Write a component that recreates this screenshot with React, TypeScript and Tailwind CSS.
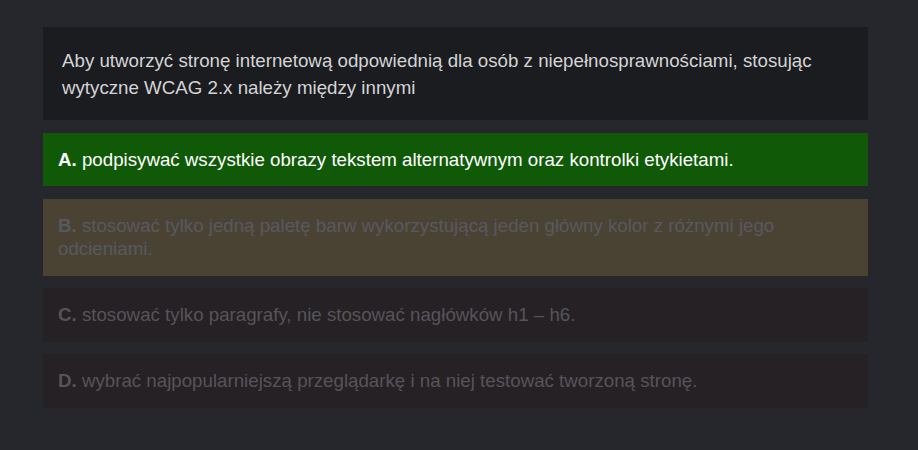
const answers = [
  { letter: "A", text: "podpisywać wszystkie obrazy tekstem alternatywnym oraz kontrolki etykietami.", state: "correct" },
  { letter: "B", text: "stosować tylko jedną paletę barw wykorzystującą jeden główny kolor z różnymi jego odcieniami.", state: "wrong" },
  { letter: "C", text: "stosować tylko paragrafy, nie stosować nagłówków h1 – h6.", state: "dim" },
  { letter: "D", text: "wybrać najpopularniejszą przeglądarkę i na niej testować tworzoną stronę.", state: "dim" },
]

const styles: Record<string, string> = {
  correct: "bg-[#105a07] text-white",
  wrong: "bg-[#4a4333] text-[#585960]",
  dim: "bg-[#262125] text-[#56545a]",
}

export default function App() {
  return (
    <div className="min-h-screen bg-[#26272c] font-['Liberation_Sans',Arial,sans-serif] text-[18.72px]">
      <div className="mx-[43px] w-[825px] pt-[27px]">
        <div className="bg-[#1b1c1f] px-[19px] py-[19.5px] leading-[27px] text-[#d4d4d6]">
          Aby utworzyć stronę internetową odpowiednią dla osób z niepełnosprawnościami, stosując wytyczne WCAG 2.x należy między innymi
        </div>
        <div className="mt-[13px] flex flex-col gap-[12.6px]">
          {answers.map((a) => (
            <div key={a.letter} className={`px-[15px] py-[15px] leading-[23.4px] ${styles[a.state]}`}>
              <span className="font-bold">{a.letter}.</span> {a.text}
            </div>
          ))}
        </div>
      </div>
    </div>
  )
}
